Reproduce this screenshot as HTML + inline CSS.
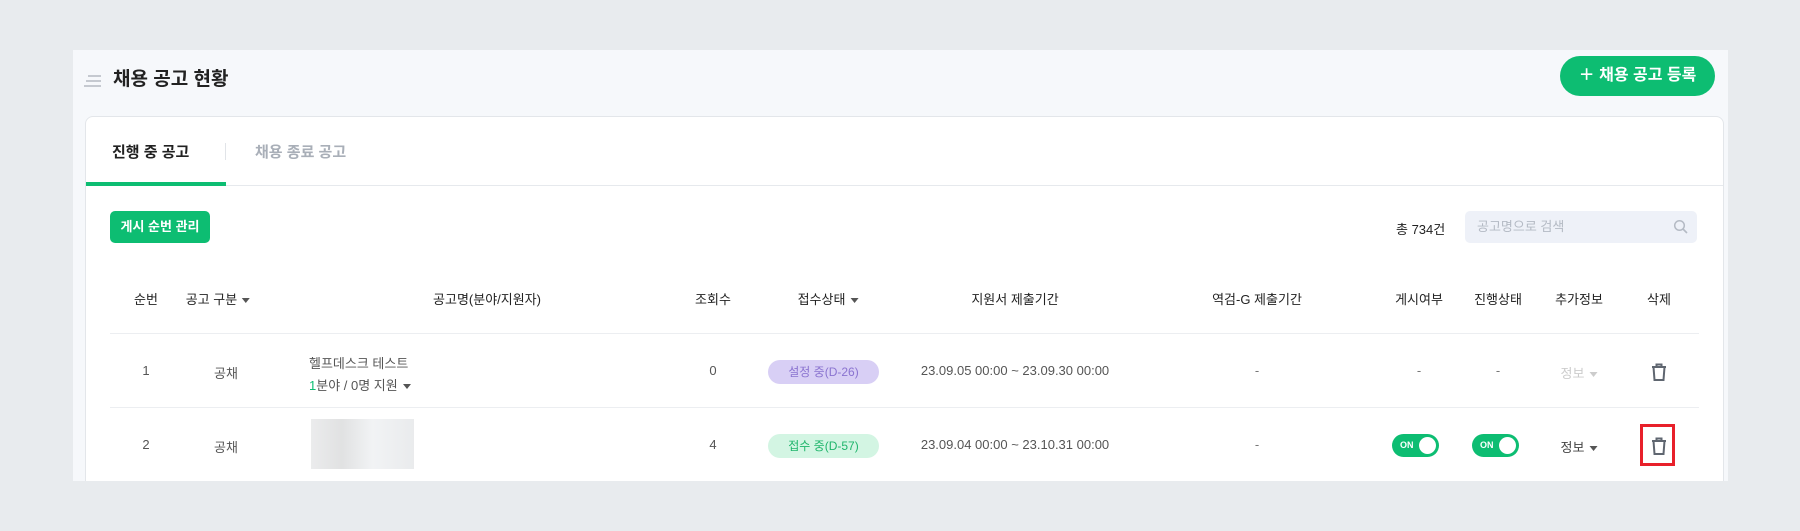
<!DOCTYPE html>
<html><head><meta charset="utf-8"><style>
*{box-sizing:border-box;margin:0;padding:0}
body{width:1800px;height:531px;background:#e8ebee;font-family:"Liberation Sans","Noto Sans CJK KR",sans-serif;position:relative;overflow:hidden;color:#222}
.abs{position:absolute}
.panel{left:73px;top:50px;width:1655px;height:431px;background:#f6f8fb;overflow:hidden}
.card{left:12px;top:66px;width:1639px;height:400px;background:#fff;border:1px solid #e3e6ea;border-radius:8px}
.c{position:absolute;transform:translateX(-50%);white-space:nowrap;font-size:13px}
.th{color:#222}
.hl{position:absolute;left:24px;width:1589px;height:1px;background:#eceef1}
.pill{position:absolute;width:111px;height:24px;border-radius:12px;font-size:12px;text-align:center;line-height:24px}
.tog{position:absolute;width:47px;height:23px;border-radius:12px;background:#0dbd72;color:#fff;font-size:9px;font-weight:bold;line-height:23px;padding-left:8px}
.tog::after{content:"";position:absolute;right:3px;top:3px;width:17px;height:17px;border-radius:50%;background:#fff}
.tri{display:inline-block;width:0;height:0;border-left:4px solid transparent;border-right:4px solid transparent;border-top:5px solid #555;vertical-align:middle;margin-left:5px}
</style></head><body>
<div class="abs panel">
  <div class="abs" style="left:11px;top:25px;width:17px">
    <div style="height:2px;background:#c5c9d0;margin:0 0 3px 4px"></div>
    <div style="height:2px;background:#c5c9d0;margin:0 0 3px 2px"></div>
    <div style="height:2px;background:#c5c9d0"></div>
  </div>
  <div class="abs" style="left:40px;top:14px;font-size:19px;font-weight:bold;color:#222">채용 공고 현황</div>
  <div class="abs" style="left:1487px;top:6px;width:155px;height:40px;border-radius:20px;background:#0dbd72;color:#fff;font-size:16px;font-weight:bold;text-align:center;line-height:40px">＋ 채용 공고 등록</div>
  <div class="abs card">
    <div class="abs" style="left:26px;top:24px;font-size:15px;font-weight:bold;color:#222">진행 중 공고</div>
    <div class="abs" style="left:139px;top:26px;width:1px;height:17px;background:#e1e4e8"></div>
    <div class="abs" style="left:169px;top:24px;font-size:15px;font-weight:bold;color:#a9afb8">채용 종료 공고</div>
    <div class="abs" style="left:0;top:68px;width:1637px;height:1px;background:#e6e9ed"></div>
    <div class="abs" style="left:0;top:65px;width:140px;height:4px;background:#0dbd72"></div>
    <div class="abs" style="left:24px;top:94px;width:100px;height:32px;border-radius:5px;background:#0dbd72;color:#fff;font-size:13px;font-weight:bold;text-align:center;line-height:32px">게시 순번 관리</div>
    <div class="abs" style="left:1310px;top:102px;font-size:13px;color:#222">총 734건</div>
    <div class="abs" style="left:1379px;top:94px;width:232px;height:32px;border-radius:5px;background:#eef1f8;color:#b4bac4;font-size:13px;line-height:32px;padding-left:12px">공고명으로 검색
      <svg style="position:absolute;right:8px;top:8px" width="16" height="16" viewBox="0 0 16 16"><circle cx="6.5" cy="6.5" r="4.8" fill="none" stroke="#b4bac4" stroke-width="1.5"/><path d="M10 10l4 4" stroke="#b4bac4" stroke-width="1.6"/></svg></div>
    <div class="c th" style="left:60px;top:172px">순번</div>
    <div class="c th" style="left:132px;top:172px">공고 구분<span class="tri"></span></div>
    <div class="c th" style="left:401px;top:172px">공고명(분야/지원자)</div>
    <div class="c th" style="left:627px;top:172px">조회수</div>
    <div class="c th" style="left:742px;top:172px">접수상태<span class="tri"></span></div>
    <div class="c th" style="left:929px;top:172px">지원서 제출기간</div>
    <div class="c th" style="left:1171px;top:172px">역검-G 제출기간</div>
    <div class="c th" style="left:1333px;top:172px">게시여부</div>
    <div class="c th" style="left:1412px;top:172px">진행상태</div>
    <div class="c th" style="left:1493px;top:172px">추가정보</div>
    <div class="c th" style="left:1573px;top:172px">삭제</div>
    <div class="hl" style="top:216px"></div>
    <div class="hl" style="top:290px"></div>
    <!-- row1 -->
    <div class="c" style="left:60px;top:246px;color:#555">1</div>
    <div class="c" style="left:140px;top:246px;color:#555">공채</div>
    <div class="abs" style="left:223px;top:236px;font-size:13px;color:#555">헬프데스크 테스트</div>
    <div class="abs" style="left:223px;top:258px;font-size:13px;color:#555"><span style="color:#0dbd72">1</span>분야 / 0명 지원<span class="tri"></span></div>
    <div class="c" style="left:627px;top:246px;color:#555">0</div>
    <div class="pill" style="left:682px;top:243px;background:#d8cff5;color:#8a73d0">설정 중(D-26)</div>
    <div class="c" style="left:929px;top:246px;color:#555">23.09.05 00:00 ~ 23.09.30 00:00</div>
    <div class="c" style="left:1171px;top:246px;color:#777">-</div>
    <div class="c" style="left:1333px;top:246px;color:#777">-</div>
    <div class="c" style="left:1412px;top:246px;color:#777">-</div>
    <div class="c" style="left:1493px;top:246px;color:#ccc">정보<span class="tri" style="border-top-color:#ccc"></span></div>
    <svg class="abs" style="left:1564px;top:245px" width="18" height="20" viewBox="0 0 18 20"><path d="M2 5h14M6.5 5V2.5h5V5M3.5 5l1 13h9l1-13" fill="none" stroke="#5f6670" stroke-width="2"/></svg>
    <!-- row2 -->
    <div class="c" style="left:60px;top:320px;color:#555">2</div>
    <div class="c" style="left:140px;top:320px;color:#555">공채</div>
    <div class="abs" style="left:225px;top:302px;width:103px;height:50px;background:linear-gradient(90deg,#e6e7e8,#d9dadb 30%,#eef0f2 60%,#e4e6e8);opacity:.8"></div>
    <div class="c" style="left:627px;top:320px;color:#555">4</div>
    <div class="pill" style="left:682px;top:317px;background:#d3f5e3;color:#1fb56b">접수 중(D-57)</div>
    <div class="c" style="left:929px;top:320px;color:#555">23.09.04 00:00 ~ 23.10.31 00:00</div>
    <div class="c" style="left:1171px;top:320px;color:#777">-</div>
    <div class="tog" style="left:1306px;top:317px">ON</div>
    <div class="tog" style="left:1386px;top:317px">ON</div>
    <div class="c" style="left:1493px;top:320px;color:#444">정보<span class="tri"></span></div>
    <div class="abs" style="left:1554px;top:307px;width:35px;height:42px;border:3px solid #e8202a"></div>
    <svg class="abs" style="left:1564px;top:319px" width="18" height="20" viewBox="0 0 18 20"><path d="M2 5h14M6.5 5V2.5h5V5M3.5 5l1 13h9l1-13" fill="none" stroke="#5f6670" stroke-width="2"/></svg>
  </div>
</div>
</body></html>
